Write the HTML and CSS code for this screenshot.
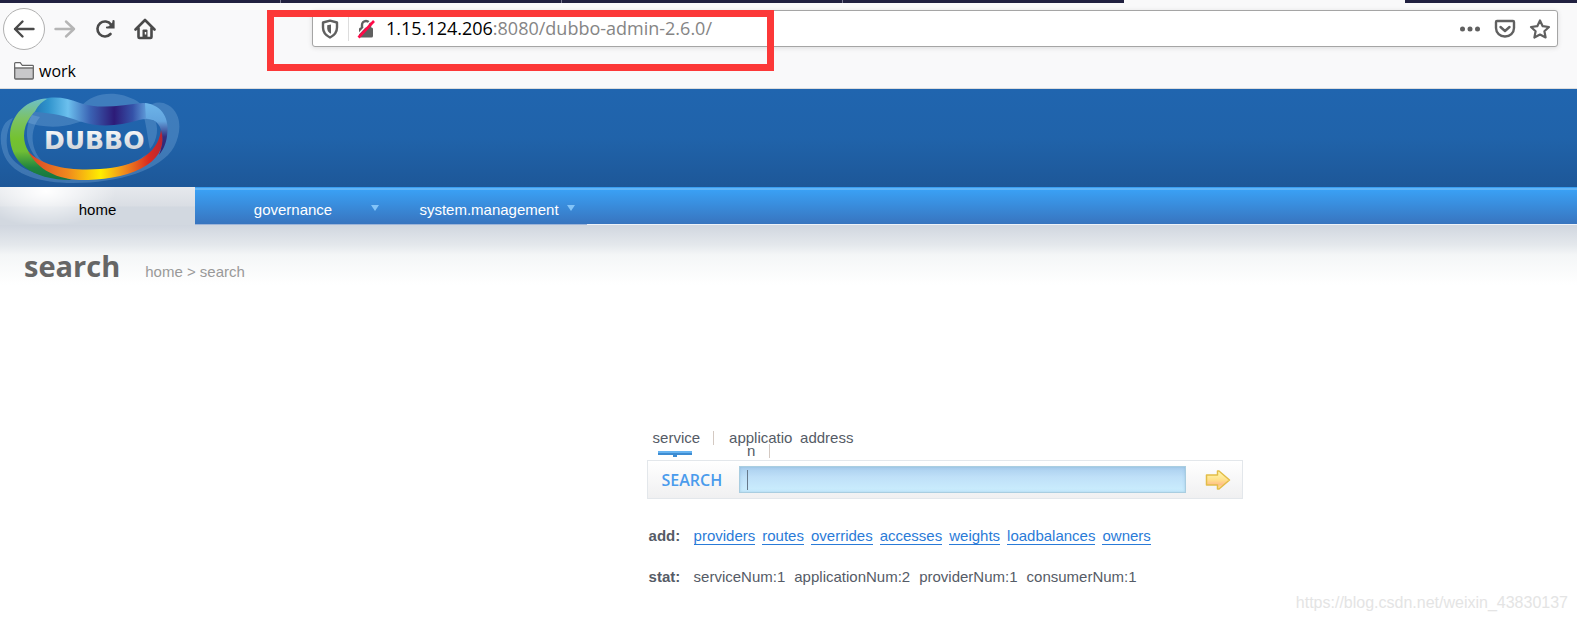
FILE: index.html
```html
<!DOCTYPE html>
<html lang="en">
<head>
  <meta charset="UTF-8" />
  <meta name="viewport" content="width=device-width, initial-scale=1" />
  <title>search</title>
  <link rel="stylesheet" href="styles.css">
</head>
<body>

  <div class="browser">
    <div class="tab-strip">
      <span class="tab"></span>
      <span class="tab"></span>
      <span class="tab"></span>
      <span class="tab"></span>
      <span class="tab active"></span>
      <span class="tab-rest"></span>
    </div>

    <div class="toolbar">
      <button class="tool back" aria-label="Back">
        <svg width="22" height="20" viewBox="0 0 22 20" fill="none" stroke="#4a4a4a" stroke-width="2.4" stroke-linecap="round" stroke-linejoin="round"><path d="M20.500 10H2M9.500 2.500L2 10l7.500 7.500"/></svg>
      </button>
      <button class="tool" aria-label="Forward">
        <svg width="22" height="20" viewBox="0 0 22 20" fill="none" stroke="#b5b5b5" stroke-width="2.400" stroke-linecap="round" stroke-linejoin="round"><path d="M1.500 10H20M12 2.500l8 7.500-8 7.500"/></svg>
      </button>
      <button class="tool" aria-label="Reload">
        <svg width="22" height="20" viewBox="0 0 22 20" fill="none" stroke="#4a4a4a" stroke-width="2.600" stroke-linecap="round"><path d="M17 5.500A7.500 7.500 0 1 0 16.500 15"/><path d="M19.500 2v6.500H13" stroke-width="2.200"/><path d="M19 3v5h-5z" fill="#4a4a4a" stroke="none"/></svg>
      </button>
      <button class="tool" aria-label="Home">
        <svg width="22" height="22" viewBox="0 0 22 22"><path d="M1.500 11.500L11 2l9.500 9.500M4.500 10v9q0 1 1 1h11q1 0 1-1v-9" fill="none" stroke="#4a4a4a" stroke-width="2.600" stroke-linecap="round" stroke-linejoin="round"/><path d="M8.500 20v-7.500q0-1 1-1h3q1 0 1 1V20z" fill="#4a4a4a"/><path d="M11.500 14v2.500" stroke="#fff" stroke-width="1.500"/></svg>
      </button>

      <div class="url-bar">
        <svg width="18" height="20" viewBox="0 0 18 20"><path d="M9 1.700L16 3.500v5q0 6.500-7 10Q2 15 2 8.500v-5z" fill="none" stroke="#606060" stroke-width="2.400" stroke-linejoin="round"/><path d="M10 5.500L6.200 6.200v3q0 3.600 3.800 5.600z" fill="#606060"/></svg>
        <span class="url-line"></span>
        <svg width="18" height="20" viewBox="0 0 18 20"><path d="M5 9V6a4 4 0 0 1 8 0v3" fill="none" stroke="#606060" stroke-width="2.400"/><rect x="2" y="8.500" width="14" height="10" rx="1.500" fill="#606060"/><path d="M0 16.500L14.500 1" stroke="#fff" stroke-width="1.500"/><path d="M1.500 18.500L17 2" stroke="#ff0a48" stroke-width="2.600"/></svg>
        <div class="url"><span class="host">1.15.124.206</span>:8080/dubbo-admin-2.6.0/</div>
        <svg width="22" height="20" viewBox="0 0 22 20" fill="#606060"><circle cx="3.500" cy="10" r="2.500"/><circle cx="11" cy="10" r="2.500"/><circle cx="18.500" cy="10" r="2.500"/></svg>
        <svg width="22" height="20" viewBox="0 0 22 20" fill="none" stroke="#606060" stroke-width="2.400" stroke-linecap="round" stroke-linejoin="round"><path d="M3 2h16q1 0 1 1v6a9 8.500 0 0 1-18 0V3q0-1 1-1z"/><path d="M6.500 8l4.500 4 4.500-4"/></svg>
        <svg width="22" height="20" viewBox="0 0 22 20" fill="none" stroke="#606060" stroke-width="2.200" stroke-linejoin="round"><path d="M11 1.500l2.700 5.700 6.300.8-4.600 4.300 1.200 6.200-5.600-3-5.600 3 1.200-6.200L2 8l6.300-.8z"/></svg>
      </div>
      <div class="highlight"></div>
    </div>

    <div class="bookmarks">
      <svg width="20" height="18" viewBox="0 0 20 18" fill="#c8c8ca" stroke="#666" stroke-width="1.300"><path d="M.7 16V1.500Q.7.700 1.500.7h4.700l2 2.600h10.300q.8 0 .8.800V16q0 1-1 1H1.700q-1 0-1-1z"/><path d="M1.400 4V1.400h4.500L7.900 4h10.700v1.500H1.400z" fill="#fff" stroke="none"/><path d="M1 6h18"/></svg>
      <span>work</span>
    </div>
  </div>

  <header class="header">
    <svg class="logo" width="181" height="98" viewBox="0 4 181 98">
      <defs>
        <linearGradient id="green" x1="0" y1="0" x2="0" y2="1">
          <stop offset="0" stop-color="#6dc0cc"/>
          <stop offset=".25" stop-color="#7cc266"/>
          <stop offset=".5" stop-color="#74c22f"/>
          <stop offset=".65" stop-color="#6fbe35"/>
          <stop offset=".85" stop-color="#1f8440"/>
          <stop offset="1" stop-color="#157540"/>
        </linearGradient>
        <linearGradient id="blue" x1="0" y1="0" x2="1" y2="0">
          <stop offset="0" stop-color="#2479b8"/>
          <stop offset=".1" stop-color="#2f93cc"/>
          <stop offset=".25" stop-color="#6cc0ee"/>
          <stop offset=".42" stop-color="#3a62b3"/>
          <stop offset=".6" stop-color="#2d1b78"/>
          <stop offset=".74" stop-color="#3552a8"/>
          <stop offset=".88" stop-color="#6db5ea"/>
          <stop offset="1" stop-color="#5a9edb"/>
        </linearGradient>
        <linearGradient id="violet" x1="0" y1="0" x2="0" y2="1">
          <stop offset="0" stop-color="#6db5ea"/>
          <stop offset=".35" stop-color="#62a4de"/>
          <stop offset=".65" stop-color="#33307f"/>
          <stop offset="1" stop-color="#33206f"/>
        </linearGradient>
        <linearGradient id="fire" x1="0" y1="0" x2="1" y2="0">
          <stop offset="0" stop-color="#d9402a"/>
          <stop offset=".3" stop-color="#f08a1d"/>
          <stop offset=".54" stop-color="#ffee00"/>
          <stop offset=".72" stop-color="#f08a1d"/>
          <stop offset=".9" stop-color="#d92a20"/>
          <stop offset="1" stop-color="#b82533"/>
        </linearGradient>
        <linearGradient id="silver" x1="0" y1="0" x2="0" y2="1">
          <stop offset="0" stop-color="#fff"/>
          <stop offset="1" stop-color="#c6cad0"/>
        </linearGradient>
      </defs>
      <g fill="#9cc4ea" fill-opacity=".26">
        <path fill-rule="evenodd" d="M13 33C-1 37-2 58 5 72c9 18 35 26 68 26 46 0 88-13 101-36 8-15 8-34-6-42-8-5-16-2-20 2 18 2 21 17 18 31-6 26-46 40-92 40-32 0-56-8-65-24C5 57 6 46 13 33z"/>
        <path d="M80 22c14-16 38-17 57-6 7 5 12 11 17 17 5 8 4 22-4 31-2-8-3-20-6-32-10-11-30-6-45-6-7 0-13-1-19-4z"/>
        <path d="M26 27c18-5 34 0 58 4 4 3 0 5-8 7-18 6-36 4-50-1z"/>
        <path d="M32 30c-9 15-6 34 9 48 22 14 78 13 106-9-20 22-86 27-106 6C30 62 30 44 40 32z"/>
      </g>
      <path fill="url(#green)" d="M58 14C32 9 10 27 10 51c0 25 20 44 62 44-22-7-48-22-48-44 0-14 9-25 22-34z"/>
      <path fill="url(#blue)" d="M44 14c10-3 24-1 36 4 20 7 43 2 63 0 15 1 22 14 24 28-6-10-16-14-28-11-20 6-40 8-60 1-13-5-26-8-44-9 2-5 5-9 12-13z"/>
      <path fill="url(#violet)" d="M145 18c18 2 25 17 22 33-1 8-4 14-8 19 5-12 4-25-1-31-3-4-7-6-12-6z"/>
      <path fill="url(#fire)" d="M28 66c14 16 44 20 72 18 34-2 58-14 61-39 4 13 0 26-14 35-15 10-37 14-59 15-30 1-50-10-60-29z"/>
      <text class="logo-text" x="44" y="64" fill="url(#silver)">DUBBO</text>
    </svg>
  </header>

  <nav class="nav">
    <a class="nav-item current" href="#">home</a>
    <a class="nav-item" href="#">governance<span class="arrow"></span></a>
    <a class="nav-item" href="#">system.management<span class="arrow"></span></a>
    <span class="nav-rest"></span>
  </nav>

  <div class="page-title">
    <h1>search</h1>
    <div class="crumbs">home &gt; search</div>
  </div>

  <main class="content">
    <div class="search-tabs">
      <a class="search-tab selected" href="#">service</a>
      <span class="divider"></span>
      <a class="search-tab wrapped" href="#">applicatio<span class="rest">n</span></a>
      <span class="divider low"></span>
      <a class="search-tab" href="#">address</a>
    </div>

    <form class="search-box">
      <label for="keyword">SEARCH</label>
      <div class="field">
        <input id="keyword" type="text">
        <span class="caret"></span>
      </div>
      <button type="button" aria-label="Go">
        <svg width="26" height="20" viewBox="0 0 26 20">
          <defs>
            <linearGradient id="gold" x1="0" y1="0" x2="0" y2="1">
              <stop offset="0" stop-color="#fffab0"/>
              <stop offset=".5" stop-color="#ffe08a"/>
              <stop offset=".75" stop-color="#ffc08a"/>
              <stop offset="1" stop-color="#fff08a"/>
            </linearGradient>
          </defs>
          <path d="M1.500 5h11V1h1.500l10.500 9L14 19h-1.500v-4h-11z" fill="url(#gold)" stroke="#e2bd48" stroke-width="1.500" stroke-linejoin="round"/>
        </svg>
      </button>
    </form>

    <div class="row links">
      <strong>add:</strong>
      <a href="#">providers</a>
      <a href="#">routes</a>
      <a href="#">overrides</a>
      <a href="#">accesses</a>
      <a href="#">weights</a>
      <a href="#">loadbalances</a>
      <a href="#">owners</a>
    </div>

    <div class="row stats">
      <strong>stat:</strong>
      <span>serviceNum:1</span>
      <span>applicationNum:2</span>
      <span>providerNum:1</span>
      <span>consumerNum:1</span>
    </div>
  </main>

  <div class="watermark">https://blog.csdn.net/weixin_43830137</div>

</body>
</html>
```

FILE: styles.css
```css
* {
  box-sizing: border-box;
}

body {
  position: relative;
  min-height: 100vh;
  margin: 0;
  font-family: "Liberation Sans", Arial, sans-serif;
  font-size: 15px;
  background: #fff;
  color: #555b66;
}

a {
  color: inherit;
  text-decoration: none;
}

button {
  padding: 0;
  border: none;
  background: none;
}

svg {
  display: block;
  flex: none;
}

/* browser */

.browser {
  background: #f9f9fa;
  border-bottom: 1px solid #ddd;
  font-family: "Open Sans", sans-serif;
}

.tab-strip {
  display: flex;
  height: 3px;
  background: #202040;
}

.tab {
  width: 281px;
  border-right: 1px solid #777790;
}

.tab:nth-child(4),
.tab.active {
  border-right: none;
}

.tab.active {
  background: #f9f9fa;
}

.tab-rest {
  flex: 1;
}

.toolbar {
  position: relative;
  display: flex;
  align-items: center;
  height: 51px;
  padding: 0 19px 0 3px;
}

.tool {
  display: flex;
  align-items: center;
  justify-content: center;
  width: 40px;
  height: 42px;
}

.tool.back {
  width: 42px;
  border: 1px solid #b0b0b0;
  border-radius: 50%;
  background: #fff;
}

.url-bar {
  display: flex;
  flex: 1;
  align-items: center;
  height: 37px;
  margin-left: 147px;
  padding: 0 6px 0 8px;
  border: 1px solid #a5a5a5;
  border-radius: 3px;
  background: #fff;
  box-shadow: 0 1px 5px rgba(0, 0, 0, 0.12);
  gap: 13px;
}

.url-line {
  width: 1px;
  height: 24px;
  margin: 0 -5px 0 -4px;
  background: #ddd;
}

.url {
  flex: 1;
  margin-left: -2px;
  padding-bottom: 2px;
  font-size: 18px;
  line-height: 24px;
  color: #858585;
}

.host {
  color: #000;
}

.highlight {
  position: absolute;
  top: 7px;
  left: 267px;
  width: 507px;
  height: 61px;
  border: 7px solid #fc3838;
}

.bookmarks {
  display: flex;
  align-items: center;
  gap: 5px;
  height: 34px;
  padding-left: 14px;
  font-size: 16px;
  color: #000;
}

/* header */

.header {
  height: 98px;
  background: linear-gradient(#2065af, #2063aa 50%, #1d5798);
}

.logo-text {
  font-family: "DejaVu Sans", sans-serif;
  font-size: 25px;
  font-weight: bold;
}

.nav {
  display: flex;
  height: 38px;
  background: linear-gradient(#3a9ff2 1px, #62b4f6 1px, #62b4f6 3px, #3aa0f4 3px, #3873bd);
}

.nav-item {
  display: flex;
  position: relative;
  align-items: center;
  justify-content: center;
  width: 196px;
  padding-top: 8px;
  border-bottom: 1px solid #9db4d8;
  color: #fff;
}

.nav-item.current {
  width: 195px;
  border-bottom-color: #d2d8e0;
  background:
    radial-gradient(ellipse 70px 36px at 46px 4px, #fff, rgba(255, 255, 255, 0)),
    linear-gradient(#e6e9ed, #dadee4 50%, #d2d8e0 55%, #d2d8e0);
  color: #000;
}

.nav-rest {
  flex: 1;
  border-bottom: 1px solid #eef2f8;
}

.arrow {
  position: absolute;
  top: 18px;
  right: 12px;
  border-top: 6px solid #83c4f8;
  border-right: 4px solid transparent;
  border-left: 4px solid transparent;
}

.page-title {
  display: flex;
  align-items: baseline;
  gap: 25px;
  height: 60px;
  padding: 21px 24px 0;
  background: linear-gradient(#d0d6df, #e4e8ec 33%, #f4f6f7 50%, #fff);
}

.page-title h1 {
  margin: 0;
  font-family: "Open Sans", sans-serif;
  font-size: 29px;
  line-height: 40px;
  color: #666;
}

.crumbs {
  color: #999;
}

/* search */

.content {
  width: 100%;
  max-width: 1243px;
  padding: 146px 0 0 41%;
}

.search-tabs {
  display: flex;
  height: 29px;
  padding-left: 6px;
  line-height: 13px;
}

.search-tab.selected {
  position: relative;
  height: 24px;
}

.selected::before,
.selected::after {
  content: "";
  position: absolute;
  left: 5px;
  bottom: 0;
  width: 34px;
  height: 4px;
  background: linear-gradient(#67b3f0 50%, #3d8cd2 50%);
}

.selected::after {
  left: 20px;
  bottom: -2px;
  width: 4px;
  height: 2px;
  background: #3d8cd2;
}

.divider {
  width: 1px;
  height: 14px;
  margin: 0 15px 0 13px;
  background: #d4c9c2;
}

.divider.low {
  margin: 13px 30px 0 -22px;
}

.wrapped {
  width: 62px;
  text-align: center;
}

.rest {
  display: block;
  padding-right: 18px;
}

.search-box {
  display: flex;
  align-items: center;
  height: 39px;
  border: 1px solid #e3e7eb;
  background: linear-gradient(#fff, #f0f0f1);
}

.search-box label {
  width: 91px;
  padding-left: 14px;
  font-family: "Open Sans", sans-serif;
  font-size: 16px;
  font-weight: 600;
  color: #4a9bec;
}

.field {
  position: relative;
  display: flex;
  flex: 1;
}

.field input {
  width: 100%;
  height: 27px;
  padding: 0 8px;
  border: 1px solid #a9cde0;
  background: linear-gradient(#aacfee, #bfe0f8 40%, #cbeefe);
  box-shadow: inset 0 0 3px rgba(80, 140, 180, 0.3);
  outline: none;
  font-size: 15px;
}

.caret {
  position: absolute;
  top: 4px;
  left: 8px;
  width: 1px;
  height: 20px;
  background: #66788a;
}

.search-box button {
  display: flex;
  justify-content: center;
  width: 56px;
  padding-left: 8px;
}

.row {
  display: flex;
  padding-left: 2px;
  line-height: 17px;
  white-space: nowrap;
}

.links {
  gap: 7px;
  margin-top: 28px;
}

.links strong {
  width: 38px;
}

.links a {
  border-bottom: 1px solid #2a7bd8;
  line-height: 17px;
  color: #2a7bd8;
}

.stats {
  gap: 9px;
  margin-top: 23px;
}

.stats strong {
  width: 36px;
}

.watermark {
  position: absolute;
  right: 9px;
  bottom: 8px;
  font-size: 16px;
  line-height: 20px;
  color: #e4e4e4;
}
```
